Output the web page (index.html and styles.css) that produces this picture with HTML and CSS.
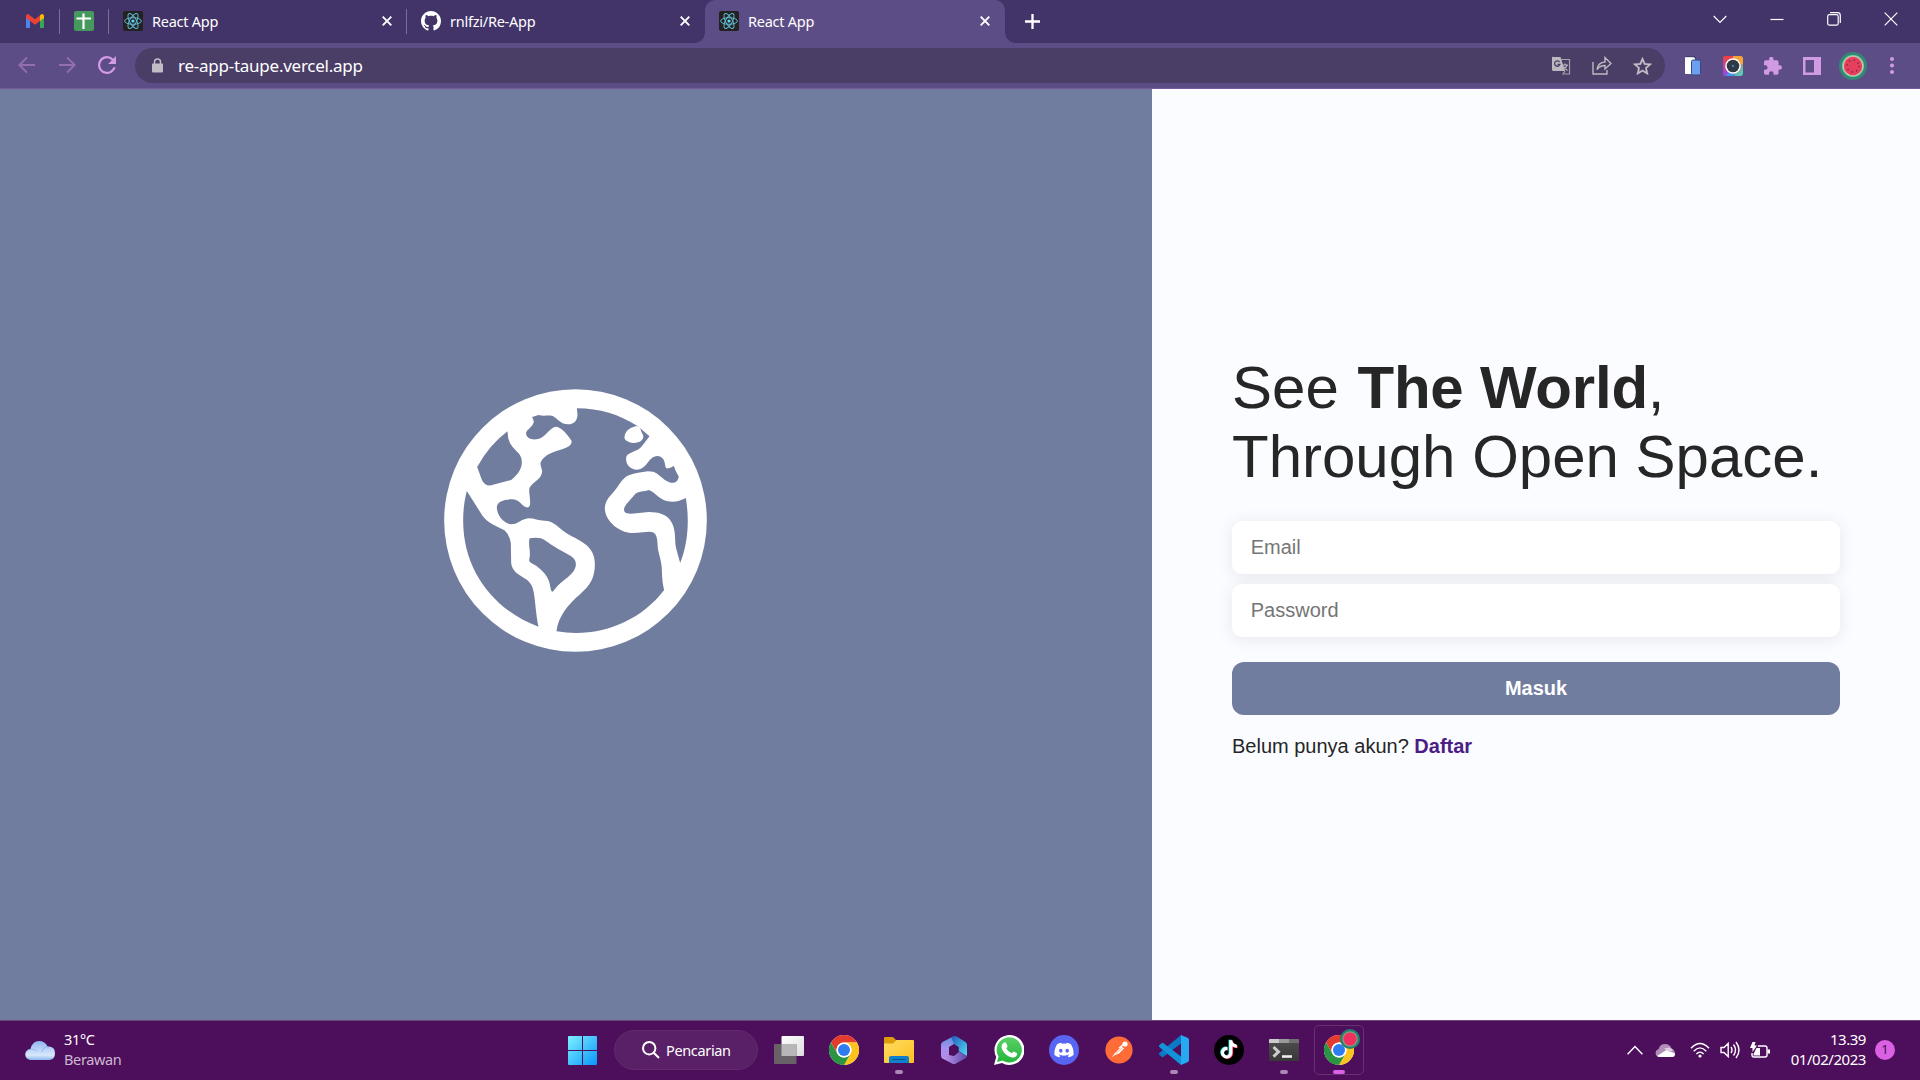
FILE: index.html
```html
<!DOCTYPE html>
<html lang="id">
<head>
<meta charset="utf-8">
<title>React App</title>
<link rel="stylesheet" href="styles.css">
</head>
<body>
<svg class="defs" width="0" height="0">
  <defs>
    <symbol id="react" viewBox="0 0 20 20">
      <rect width="20" height="20" rx="2" fill="#222"/>
      <g fill="none" stroke="#61b9d0" stroke-width="1">
        <ellipse cx="10" cy="10" rx="8.4" ry="3.3"/>
        <ellipse cx="10" cy="10" rx="8.4" ry="3.3" transform="rotate(60 10 10)"/>
        <ellipse cx="10" cy="10" rx="8.4" ry="3.3" transform="rotate(120 10 10)"/>
      </g>
      <circle cx="10" cy="10" r="1.6" fill="#61dafb"/>
    </symbol>
    <symbol id="close" viewBox="0 0 10 10"><path d="M.7.7l8.6 8.6M9.3.7L.7 9.3" stroke="#fff" stroke-width="1.9"/></symbol>
    <symbol id="chrome" viewBox="0 0 30 30">
      <circle cx="15" cy="15" r="15" fill="#fff"/>
      <path d="M2 7.5A15 15 0 0 1 28 7.5H15A7.5 7.5 0 0 0 8.5 18.75z" fill="#e33b2e"/>
      <path d="M28 7.5A15 15 0 0 1 15 30L21.5 18.75A7.5 7.5 0 0 0 15 7.5z" fill="#fcc31e"/>
      <path d="M15 30A15 15 0 0 1 2 7.5L8.5 18.75A7.5 7.5 0 0 0 21.5 18.75z" fill="#2a9443"/>
      <circle cx="15" cy="15" r="7.5" fill="#fff"/><circle cx="15" cy="15" r="6" fill="#2f7bf0"/>
    </symbol>
    <linearGradient id="win" x1="0" y1="0" x2="1" y2="1"><stop offset="0" stop-color="#7df1ff"/><stop offset="1" stop-color="#0a95fb"/></linearGradient>
    <linearGradient id="cloudFill" x1="0" y1="0" x2="0" y2="1"><stop offset="0" stop-color="#8fb6f3"/><stop offset=".75" stop-color="#d9e8fb"/><stop offset="1" stop-color="#8db4ee"/></linearGradient>
    <linearGradient id="folderFill" x1="0" y1="0" x2="1" y2="1"><stop offset="0" stop-color="#ffdc62"/><stop offset="1" stop-color="#fdc021"/></linearGradient>
    <linearGradient id="rainbow" x1="0" y1="0" x2="1" y2="1"><stop offset="0" stop-color="#f0413f"/><stop offset=".3" stop-color="#f03d5c"/><stop offset="1" stop-color="#3ee6c5"/></linearGradient>
    <linearGradient id="rainbowLeft" x1="0" y1="0" x2="0" y2="1"><stop offset="0" stop-color="#f0413f"/><stop offset="1" stop-color="#8c4bf2"/></linearGradient>
    <linearGradient id="m1" x1="0" y1="0" x2="0" y2="1"><stop offset="0" stop-color="#5d8ddd"/><stop offset=".5" stop-color="#a493ed"/><stop offset="1" stop-color="#b58ae6"/></linearGradient>
    <linearGradient id="m2" x1="0" y1="0" x2="1" y2="1"><stop offset="0" stop-color="#1f5abb"/><stop offset="1" stop-color="#51ddf8"/></linearGradient>
    <linearGradient id="m3" x1="0" y1="0" x2="1" y2="0"><stop offset="0" stop-color="#c297ef"/><stop offset="1" stop-color="#5b4ba8"/></linearGradient>
    <linearGradient id="wa" x1="0" y1="0" x2="0" y2="1"><stop offset="0" stop-color="#5ad167"/><stop offset="1" stop-color="#25b43c"/></linearGradient>
    <linearGradient id="viewFront" x1="0" y1="0" x2="1" y2="1"><stop offset="0" stop-color="#fff"/><stop offset="1" stop-color="#ddd"/></linearGradient>
    <linearGradient id="term" x1="0" y1="0" x2="0" y2="1"><stop offset="0" stop-color="#505050"/><stop offset="1" stop-color="#373737"/></linearGradient>
  </defs>
</svg>

<header class="browser">
  <div class="tabstrip">
    <div class="pin pin-mail">
      <svg width="18" height="14" viewBox="0 0 18 14"><path d="M0 2v11q0 1 1 1h3V5z" fill="#4a84f0"/><path d="M18 2v11q0 1-1 1h-3V5z" fill="#34a853"/><path d="M14 1.3V7l4-3V2q0-2-2-2z" fill="#fbbc04"/><path d="M0 2q0-2 2-2l7 5.2L14 1.3V7L9 10.8 4 7 0 4z" fill="#ea4335"/></svg>
    </div>
    <i class="sep"></i>
    <div class="pin pin-sheet">
      <svg width="20" height="20" viewBox="0 0 20 20"><rect width="20" height="20" rx="2" fill="#45995c"/><path d="M9.500 2.500v15.500M2.500 7.500h14.500" stroke="#fff" stroke-width="2.200"/></svg>
    </div>
    <i class="sep"></i>
    <div class="tab tab-first">
      <svg class="favicon"><use href="#react"/></svg><span class="tab-title">React App</span><svg class="tab-close"><use href="#close"/></svg>
    </div>
    <i class="sep"></i>
    <div class="tab tab-repo">
      <svg class="favicon" viewBox="0 0 16 16"><path fill="#fff" d="M8 0C3.58 0 0 3.58 0 8c0 3.54 2.29 6.53 5.47 7.59.4.07.55-.17.55-.38 0-.19-.01-.82-.01-1.49-2.01.37-2.53-.49-2.69-.94-.09-.23-.48-.94-.82-1.13-.28-.15-.68-.52-.01-.53.63-.01 1.08.58 1.23.82.72 1.21 1.87.87 2.33.66.07-.52.28-.87.51-1.07-1.78-.2-3.64-.89-3.64-3.95 0-.87.31-1.59.82-2.15-.08-.2-.36-1.02.08-2.12 0 0 .67-.21 2.2.82.64-.18 1.32-.27 2-.27s1.360.09 2 .27c1.530-1.040 2.200-.82 2.200-.82.44 1.100.16 1.920.08 2.120.51.56.82 1.270.82 2.150 0 3.070-1.870 3.750-3.650 3.950.29.25.54.73.54 1.480 0 1.070-.01 1.930-.01 2.200 0 .21.15.46.55.38A8.010 8.010 0 0 0 16 8c0-4.420-3.580-8-8-8z"/></svg>
      <span class="tab-title">rnlfzi/Re-App</span><svg class="tab-close"><use href="#close"/></svg>
    </div>
    <div class="tab tab-active">
      <svg class="favicon"><use href="#react"/></svg><span class="tab-title">React App</span><svg class="tab-close"><use href="#close"/></svg>
    </div>
    <svg class="new-tab" viewBox="0 0 15 15"><path d="M7.500 0v15M0 7.500h15" stroke="#fff" stroke-width="2.300"/></svg>
    <div class="window-buttons">
      <svg width="14" height="14" viewBox="0 0 14 14"><path d="M.7 4l6.300 6.300L13.300 4"/></svg>
      <svg width="14" height="14" viewBox="0 0 14 14"><path d="M.5 7.500h13"/></svg>
      <svg width="14" height="14" viewBox="0 0 14 14"><rect x=".7" y="2.700" width="10.500" height="10.500" rx="1.800"/><path d="M3 .7h7.500q2.800 0 2.800 2.800V11"/></svg>
      <svg width="14" height="14" viewBox="0 0 14 14"><path d="M.7.7l12.600 12.600M13.300.7L.7 13.300"/></svg>
    </div>
  </div>

  <div class="toolbar">
    <div class="nav">
      <svg class="dim" width="18" height="18" viewBox="0 0 18 18"><path d="M17 9H1.500M9 1.300L1.300 9 9 16.700"/></svg>
      <svg class="dim" width="18" height="18" viewBox="0 0 18 18"><path d="M1 9h15.500M9 1.300L16.700 9 9 16.700"/></svg>
      <svg width="18" height="18" viewBox="4 4 16 16"><path fill="#d39ae6" d="M17.650 6.350A7.960 7.960 0 0 0 12 4a8 8 0 1 0 7.730 10h-2.080A6 6 0 1 1 12 6c1.660 0 3.140.69 4.220 1.780L13 11h7V4z"/></svg>
    </div>
    <div class="address">
      <svg class="lock" viewBox="0 0 11 15"><rect y="5.500" width="11" height="9" rx="1" fill="#c1bcc5"/><path d="M2.500 6V4a3 3 0 0 1 6 0v2" fill="none" stroke="#c1bcc5" stroke-width="1.500"/></svg>
      <span class="url">re-app-taupe.vercel.app</span>
      <div class="address-actions">
        <svg width="19" height="19" viewBox="0 0 19 19"><path d="M1 1h7.500l4.500 14H1.500Q0 15 0 13.500V2Q0 .5 1 .5z" fill="#bdb8bf"/><path d="M9 3.500h8.500V18H11l2-3" fill="none" stroke="#a6a0ac" stroke-width="1.200"/><path d="M7.600 6.100a2.700 2.700 0 1 0 .3 2.200H5.500" fill="none" stroke="#4a3d66" stroke-width="1.300"/><path d="M10.500 9h5.500M13 7.500V9M15 9q-1 3.500-4 5M11.500 10.500q1.500 2.500 4 4" fill="none" stroke="#bdb8bf" stroke-width="1.100"/></svg>
        <svg width="20" height="19" viewBox="0 0 20 19"><path d="M1 6v12h14v-4M5 13.500Q6 6.500 13 6V1.500L19 7.500 13 13V9.500Q8 9.500 5 13.500z" fill="none" stroke="#bdb8bf" stroke-width="1.400"/></svg>
        <svg width="19" height="18" viewBox="2 2 20 19"><path fill="#c6c0ca" stroke="#c6c0ca" stroke-width=".3" d="M22 9.240l-7.190-.62L12 2 9.190 8.630 2 9.240l5.460 4.730L5.820 21 12 17.270 18.180 21l-1.630-7.030zM12 15.400l-3.760 2.270 1-4.280-3.320-2.880 4.380-.38L12 6.100l1.710 4.040 4.380.38-3.320 2.880 1 4.280z"/></svg>
      </div>
    </div>
    <div class="extensions">
      <svg width="18" height="20" viewBox="0 0 18 20"><path d="M1 2q0-1 1-1h7q2 0 2 2v15H2q-1 0-1-1z" fill="#fff"/><path d="M2 .7h8q1.500.5 1.800 2" fill="none" stroke="#3d3a66"/><rect x="7.500" y="4" width="9" height="15" rx="1.500" fill="#6b9ff0" stroke="#3a4784"/></svg>
      <svg width="20" height="20" viewBox="0 0 20 20"><rect width="20" height="20" rx="3" fill="url(#rainbow)"/><path d="M0 3q0-3 3-3l7 10-7 10q-3 0-3-3z" fill="url(#rainbowLeft)"/><path d="M3 20L10 10l2 10z" fill="#4196ed"/><path d="M10 0h7q3 0 3 3v5L10 10z" fill="#f4a53a"/><circle cx="10" cy="10" r="7.800" fill="#fff"/><circle cx="10" cy="10" r="6.300" fill="#343941"/><circle cx="10" cy="10" r="3.500" fill="#263c4c"/><circle cx="10" cy="10" r="1.300" fill="#55748c"/></svg>
      <svg width="18" height="18" viewBox="2 1.500 21 20.500"><path fill="#d09be2" d="M20.500 11H19V7a2 2 0 0 0-2-2h-4V3.500a2.500 2.500 0 0 0-5 0V5H4a2 2 0 0 0-1.990 2v3.800H3.500a2.700 2.700 0 0 1 0 5.400H2V20a2 2 0 0 0 2 2h3.800v-1.500a2.700 2.700 0 0 1 5.400 0V22H17a2 2 0 0 0 2-2v-4h1.500a2.500 2.500 0 0 0 0-5z"/></svg>
      <svg width="18" height="18" viewBox="0 0 18 18"><path fill="#d09be2" fill-rule="evenodd" d="M0 0h18v18H0zM2.500 3v12.500H11V3z"/></svg>
      <svg width="28" height="28" viewBox="0 0 28 28"><circle cx="14" cy="14" r="14" fill="#348774"/><circle cx="14" cy="14" r="11" fill="#77d0a8"/><circle cx="14" cy="14" r="10" fill="#f5b9a8"/><circle cx="14" cy="14" r="9.200" fill="#e53f5d"/><circle cx="14" cy="14" r="6" fill="none" stroke="#72283f" stroke-width="1.500" stroke-dasharray="1.300 3.410"/></svg>
      <svg width="4" height="17" viewBox="0 0 4 17"><g fill="#d09be2"><circle cx="2" cy="2" r="2"/><circle cx="2" cy="8.500" r="2"/><circle cx="2" cy="15" r="2"/></g></svg>
    </div>
  </div>
</header>

<main class="page">
  <section class="hero">
    <svg class="globe" viewBox="44 28 788 789">
      <circle cx="438" cy="422.500" r="394" fill="#fff"/>
      <g class="sea">
        <path d="M234 155Q180 195 143 262L157 300Q166 320 185 317L245 301C262 288 277 270 277 248C277 225 265 220 250 203Q234 185 234 155z"/>
        <path d="M112 334C103 370 101 395 101 424C101 570 190 690 327 741C315 680 318 630 303 612C290 590 250 588 245 550L244 490Q240 465 225 452C200 440 175 430 160 410z"/>
        <path d="M202 383C202 365 225 359 247 359C270 359 275 378 290 383Q302 385 302 370C302 350 297 335 300 325C310 305 337 300 338 275C336 262 330 255 335 245C345 225 375 215 400 208C420 202 430 192 425 182C415 165 395 142 380 141C360 142 350 174 322 179C300 181 288 172 290 158C293 150 312 140 313 125L308 112L327 106C340 110 355 106 370 109C385 118 395 134 415 134C435 134 444 120 444 105L442 86C510 86 570 105 624 139L660 170L637 200C625 217 600 215 591 230C585 250 600 270 622 270C655 268 655 230 684 229C712 232 703 262 712 266Q718 268 733 259L739 275L748 291C742 315 725 313 705 300C685 285 680 275 655 275C635 278 615 280 600 286C575 295 570 320 545 345C515 375 522 410 555 440C590 465 610 461 640 458C670 453 682 455 684 490C684 520 697 540 697 570Q698 610 704 631C640 715 540 760 440 760Q410 760 381 755C385 710 420 670 450 645C485 615 497 590 496 550C495 500 455 485 420 466C385 445 375 423 345 423C320 423 305 410 285 419C265 425 265 434 245 434C220 430 202 405 202 383z"/>
        <path d="M300 476C320 473 335 474 345 481C370 500 400 515 425 530C445 543 442 565 428 580C410 600 390 608 371 635Q366 640 363 625C360 600 350 580 320 558C305 549 299 548 299 540Q302 530 301 515Q297 490 300 476z"/>
        <path d="M584 393C580 378 605 360 615 345C625 333 645 337 658 331C680 338 690 366 728 366Q750 366 769 355C780 420 776 490 752 550C745 520 737 505 737 480C737 430 720 397 658 397L605 402Q585 402 584 393z"/>
      </g>
      <path fill="#fff" d="M622 139L631 143Q636 160 641 167C644 180 632 190 612 190C595 188 583 180 585 171C588 150 605 143 622 139z"/>
    </svg>
  </section>
  <section class="login">
    <h1 class="headline">See <strong>The World</strong>,<br>Through Open Space.</h1>
    <form class="login-form">
      <input class="field" type="email" placeholder="Email">
      <input class="field" type="password" placeholder="Password">
      <button class="submit" type="button">Masuk</button>
    </form>
    <p class="signup">Belum punya akun? <a class="signup-link" href="#">Daftar</a></p>
  </section>
</main>

<footer class="taskbar">
  <div class="weather">
    <svg width="30" height="19" viewBox="0 0 30 19"><path d="M6 19a5.500 5.500 0 0 1-.5-11Q7.500 0 14 0q6 0 8.500 5.500Q30 5 30 12q0 7-6 7z" fill="url(#cloudFill)"/><path d="M17 11q1-5 6-5.500M2 10q4-4 10 0" stroke="#7fa5ea" stroke-opacity=".6" fill="none"/></svg>
    <div class="weather-text"><span>31°C</span><span class="weather-state">Berawan</span></div>
  </div>
  <div class="dock">
    <svg class="start" viewBox="0 0 29 29"><path fill="url(#win)" d="M1 0h13v14H0V1q0-1 1-1zM15 0h13q1 0 1 1v13H15zM0 15h14v14H1q-1 0-1-1zM15 15h14v13q0 1-1 1H15z"/></svg>
    <div class="search"><svg width="18" height="18" viewBox="0 0 18 18"><circle cx="7.200" cy="7.200" r="6.200"/><path d="M11.700 11.700L17 17"/></svg><span>Pencarian</span></div>
    <div class="app"><svg viewBox="0 0 30 30"><rect x="7.500" y="1" width="22.500" height="20" rx="1" fill="url(#viewFront)"/><rect y="9" width="22.500" height="20" rx="1" fill="#686268"/><rect x="7.500" y="9" width="15" height="12" fill="#b8b6b8"/></svg></div>
    <div class="app"><svg><use href="#chrome"/></svg></div>
    <div class="app running"><svg viewBox="0 0 30 30"><path d="M0 3q0-1 1-1h8l4 4v4H0z" fill="#dd9c0a"/><path d="M0 8.500h9L12.500 5H29q1 0 1 1v21q0 1-1 1H1q-1 0-1-1z" fill="url(#folderFill)"/><path d="M5 28v-5q0-2 2-2h16q2 0 2 2v5z" fill="#1080cc"/><path d="M8.500 24.500h13" stroke="#075391"/></svg></div>
    <div class="app"><svg viewBox="0 0 30 30"><path d="M14 1.500L3.500 7Q2 8 2 10v11q0 2 2 3l6-3.500V12l5-3z" fill="url(#m1)"/><path d="M12 2l4-1q1 0 2 .7L26.500 7Q28 8 28 10v11L19.500 16v-4L15 9z" fill="url(#m2)"/><path d="M3.500 23.500L10 20l5 1 4.500-4.500L28 21q-.5 1.500-2 2.500L17 28.500q-2 1-4 0z" fill="url(#m3)"/><path d="M15 9.500l4.500 2.700v5.300L15 20.500l-4.500-3v-5.300z" fill="#4d0f5c"/></svg></div>
    <div class="app"><svg viewBox="0 0 30 30"><path d="M0 30L2.200 22A15 15 0 1 1 8 28z" fill="#fff"/><path d="M3 27l1.600-5.400A12.600 12.600 0 1 1 8.500 25.500z" fill="url(#wa)"/><path d="M10 7.500q1-.6 2 .2l1.500 3.200q.2.700-1.300 2.300 1.800 3.500 5.600 5 1.300-1.800 2-1.800l3.300 1.800c.5 3-2.500 4.500-4.500 4.300C13 22 7.500 16 7.500 11.500q0-2.500 2.500-4z" fill="#fff"/></svg></div>
    <div class="app"><svg viewBox="0 0 30 30"><circle cx="15" cy="15" r="15" fill="#5865f2"/><path transform="translate(5.400 5.400) scale(.8)" fill="#fff" d="M20.317 4.370a19.791 19.791 0 0 0-4.885-1.515.074.074 0 0 0-.079.037c-.21.375-.444.864-.608 1.250a18.270 18.270 0 0 0-5.487 0 12.640 12.640 0 0 0-.617-1.250.077.077 0 0 0-.079-.037A19.736 19.736 0 0 0 3.677 4.370a.07.07 0 0 0-.032.027C.533 9.046-.32 13.580.099 18.057a.082.082 0 0 0 .031.057 19.900 19.900 0 0 0 5.993 3.030.078.078 0 0 0 .084-.028c.462-.63.874-1.295 1.226-1.994a.076.076 0 0 0-.041-.106 13.107 13.107 0 0 1-1.872-.892.077.077 0 0 1-.008-.128c.126-.094.252-.192.372-.292a.074.074 0 0 1 .077-.01c3.928 1.793 8.180 1.793 12.062 0a.074.074 0 0 1 .078.009c.12.099.246.198.373.292a.077.077 0 0 1-.006.127 12.299 12.299 0 0 1-1.873.892.077.077 0 0 0-.041.107c.36.698.772 1.362 1.225 1.993a.076.076 0 0 0 .084.028 19.839 19.839 0 0 0 6.002-3.030.077.077 0 0 0 .032-.054c.5-5.177-.838-9.674-3.549-13.660a.061.061 0 0 0-.031-.03zM8.020 15.330c-1.183 0-2.157-1.085-2.157-2.419 0-1.333.956-2.419 2.157-2.419 1.210 0 2.176 1.096 2.157 2.420 0 1.333-.956 2.418-2.157 2.418zm7.975 0c-1.183 0-2.157-1.085-2.157-2.419 0-1.333.955-2.419 2.157-2.419 1.210 0 2.176 1.096 2.157 2.420 0 1.333-.946 2.418-2.157 2.418z"/></svg></div>
    <div class="app"><svg viewBox="0 0 30 30"><circle cx="15" cy="15" r="13.600" fill="#ff6c37"/><path d="M7.500 22.500L11 18l6.500-6.500 2.500 2-5 5-4 1.500z" fill="#fff"/><path d="M15 13l4.500-3.500" stroke="#fff" stroke-width="1.500"/><circle cx="21" cy="9" r="2.600" fill="#fff"/><path d="M12 18.500l6-5.500" stroke="#ff9f7d" stroke-width=".8"/></svg></div>
    <div class="app running"><svg viewBox="0 0 30 30"><path d="M22 0v8.500L3.500 22.500 0 19.500q-.5-.8.300-1.500z" fill="#0b79c5"/><path d="M22 30v-8.500L3.500 7.500 0 10.500q-.5.800.3 1.500z" fill="#1292d8"/><path d="M22 0l7 3q1 .6 1 2v20q0 1.400-1 2l-7 3z" fill="#27a9f2"/></svg></div>
    <div class="app"><svg viewBox="0 0 30 30"><circle cx="15" cy="15" r="15" fill="#000"/><g transform="translate(5.800 5.200) scale(.76)"><path transform="translate(-1 -.7)" fill="#25f4ee" d="M12.525.02c1.310-.02 2.610-.01 3.910-.02.08 1.530.63 3.090 1.750 4.170 1.120 1.110 2.700 1.620 4.240 1.790v4.030c-1.440-.05-2.890-.35-4.200-.97-.57-.26-1.100-.59-1.620-.93-.01 2.920.01 5.840-.02 8.750-.08 1.400-.54 2.790-1.350 3.940-1.310 1.920-3.580 3.170-5.910 3.210-1.430.08-2.860-.31-4.080-1.030-2.020-1.190-3.440-3.370-3.650-5.710-.02-.5-.03-1-.01-1.490.18-1.900 1.120-3.720 2.580-4.960 1.660-1.440 3.980-2.130 6.150-1.720.02 1.480-.04 2.960-.04 4.440-.99-.32-2.150-.23-3.020.37-.63.41-1.110 1.040-1.360 1.750-.21.51-.15 1.070-.14 1.610.24 1.640 1.820 3.020 3.500 2.870 1.120-.01 2.190-.66 2.770-1.610.19-.33.4-.67.41-1.060.1-1.790.06-3.570.07-5.360.01-4.030-.01-8.050.02-12.070z"/><path transform="translate(1 .7)" fill="#fe2c55" d="M12.525.02c1.310-.02 2.610-.01 3.910-.02.08 1.530.63 3.090 1.750 4.170 1.120 1.110 2.700 1.620 4.240 1.790v4.030c-1.440-.05-2.890-.35-4.200-.97-.57-.26-1.100-.59-1.620-.93-.01 2.920.01 5.840-.02 8.750-.08 1.400-.54 2.790-1.350 3.940-1.310 1.920-3.580 3.170-5.910 3.210-1.430.08-2.860-.31-4.080-1.030-2.020-1.190-3.440-3.370-3.650-5.710 6 5 11 1 11.200-3z"/><path fill="#fff" d="M12.525.02c1.310-.02 2.610-.01 3.910-.02.08 1.530.63 3.090 1.750 4.170 1.120 1.110 2.700 1.620 4.240 1.790v4.030c-1.440-.05-2.890-.35-4.200-.97-.57-.26-1.100-.59-1.620-.93-.01 2.920.01 5.840-.02 8.750-.08 1.400-.54 2.790-1.350 3.940-1.310 1.920-3.580 3.170-5.910 3.210-1.430.08-2.860-.31-4.080-1.030-2.020-1.190-3.440-3.370-3.650-5.710-.02-.5-.03-1-.01-1.490.18-1.900 1.120-3.720 2.580-4.960 1.660-1.440 3.980-2.130 6.150-1.720.02 1.480-.04 2.960-.04 4.440-.99-.32-2.150-.23-3.020.37-.63.41-1.110 1.040-1.360 1.750-.21.51-.15 1.070-.14 1.610.24 1.640 1.820 3.020 3.500 2.870 1.120-.01 2.190-.66 2.770-1.610.19-.33.4-.67.41-1.060.1-1.790.06-3.570.07-5.360.01-4.030-.01-8.050.02-12.070z"/></g></svg></div>
    <div class="app running"><svg viewBox="0 0 30 30"><rect y="4" width="30" height="22" rx="1.500" fill="url(#term)"/><path d="M0 8V5q0-1 1-1h9v4z" fill="#ccc"/><path d="M10 4h10v4H10z" fill="#999"/><path d="M20 4h9q1 0 1 1v3H20z" fill="#707070"/><path d="M4.500 12l5 4.800-5 4.800" fill="none" stroke="#ccc" stroke-width="3"/><path d="M13 21.500h10" stroke="#eee" stroke-width="2.600"/></svg></div>
    <div class="app running active"><svg><use href="#chrome"/></svg>
      <svg class="profile-badge" viewBox="0 0 20 20"><circle cx="10" cy="10" r="10" fill="#22806f"/><circle cx="10" cy="10" r="7.700" fill="#8c9a80"/><circle cx="10" cy="10" r="6.500" fill="#f02f5c"/></svg></div>
  </div>
  <div class="tray">
    <svg width="16" height="10" viewBox="0 0 16 10"><path d="M.6 9.300L8 1.500l7.400 7.800"/></svg>
    <svg class="onedrive" width="20" height="13" viewBox="0 0 20 13"><path d="M4 13a4 4 0 0 1-.5-7.800Q5 0 10 0q5 0 6.500 4.500Q20 6 20 9.500q0 3.500-3 3.500z"/><path d="M2 12L11.500 6 20 9.500q0 3.500-3 3.500H4z"/><path d="M9 4.500l5-1 4 2-3 3z"/></svg>
    <svg width="20" height="16" viewBox="0 0 20 16"><path d="M1 6.200q9-9.500 18 0M3.700 9.200q6.300-6.600 12.600 0M6.400 12q3.600-3.700 7.200 0"/><circle cx="10" cy="14" r="1.600" fill="#fff" stroke="none"/></svg>
    <svg width="20" height="18" viewBox="0 0 20 18"><path d="M1 6.500h3L8.200 2.500v13L4 11.500H1zM11 6q2 3 0 6M13.500 3.500q4 5.500 0 11M16 1q6 8 0 16"/></svg>
    <svg width="20" height="17" viewBox="0 0 20 17"><path d="M8 4h7q2 0 2 2v7q0 2-2 2H4q-2 0-2-2v-2"/><path class="solid" d="M2.500 0h3L4.500 3.500H7L2.500 10V6H0zM3.500 12l3-6H10v7.500H3.500zM17.500 7.500H20v4h-2.500z"/></svg>
    <div class="clock"><span>13.39</span><span>01/02/2023</span></div>
    <span class="notice">1</span>
  </div>
</footer>
</body>
</html>
```
FILE: styles.css
```css
* { box-sizing: border-box; }
body { margin: 0; width: 1920px; height: 1080px; overflow: hidden; display: flex; flex-direction: column; font-family: "Noto Sans", "Open Sans", sans-serif; }
svg { display: block; flex: none; }
.defs { position: absolute; }

/* browser chrome */
.browser { height: 89px; background: #5d4d87; border-bottom: 1px solid #75599a; color: #fff; }
.tabstrip { height: 43px; background: #423369; display: flex; align-items: center; }
.pin { display: flex; justify-content: center; padding-bottom: 1px; }
.pin-mail { width: 59px; padding-left: 11px; }
.pin-sheet { width: 48px; }
.sep { width: 1px; height: 25px; background: #7b6f96; }
.tab { width: 298px; height: 43px; padding: 0 15px 1px 14px; display: flex; align-items: center; }
.tab-first { width: 297px; padding-left: 14px; padding-right: 14px; }
.favicon { width: 20px; height: 20px; }
.tab-title { flex: 1; margin-left: 9px; font-size: 14.5px; letter-spacing: -.25px; line-height: 20px; padding-bottom: 1px; }
.tab-close { width: 10px; height: 10px; }
.tab-active { position: relative; width: 300px; background: #5d4d87; border-radius: 10px 10px 0 0; }
.tab-active::before, .tab-active::after { content: ""; position: absolute; bottom: 0; width: 10px; height: 10px; }
.tab-active::before { left: -10px; background: radial-gradient(circle at 0 0, #423369 9.5px, #5d4d87 10px); }
.tab-active::after { right: -10px; background: radial-gradient(circle at 100% 0, #423369 9.5px, #5d4d87 10px); }
.new-tab { width: 15px; height: 15px; margin-left: 20px; }
.window-buttons { margin: 0 22px 6px auto; display: flex; gap: 43px; }
.window-buttons path, .window-buttons rect { fill: none; stroke: #fff; stroke-width: 1.2; }

.toolbar { height: 45px; display: flex; align-items: center; }
.nav { width: 135px; padding: 0 0 1px 18px; display: flex; gap: 22px; }
.nav .dim path { fill: none; stroke: #936fb1; stroke-width: 1.9; }
.address { width: 1530px; height: 35px; padding: 0 13px 0 17px; border-radius: 18px; background: #4a3d66; display: flex; align-items: center; }
.lock { width: 11px; height: 15px; }
.url { margin-left: 15px; font-size: 17px; letter-spacing: -.25px; line-height: 24px; }
.address-actions { margin-left: auto; display: flex; align-items: center; gap: 21px; }
.extensions { margin-left: 19px; display: flex; align-items: center; gap: 21px; }
.extensions svg:nth-child(4) { margin-right: -3px; }
.extensions svg:nth-child(6) { margin-left: 2px; }

/* page */
.page { height: 931px; display: grid; grid-template-columns: 1152px 768px; }
.hero { background: #717d9f; display: flex; align-items: center; justify-content: center; padding: 0 1px 68px 0; }
.globe { width: 263px; height: 263px; }
.sea { fill: #717d9f; }
.login { background: #fbfcff; padding: 264px 80px 0; font-family: "Liberation Sans", Arial, sans-serif; color: #262626; }
.headline { margin: 0 0 30px; font-size: 60px; line-height: 69px; font-weight: 400; }
.headline strong { margin-left: 2px; letter-spacing: -.2px; }
.login-form { display: flex; flex-direction: column; gap: 10px; }
.field { height: 53px; padding: 0 18.75px; border: 0; border-radius: 10px; background: #fff; box-shadow: 0 2px 16px rgba(60, 60, 80, .11); font: 20px "Liberation Sans", Arial, sans-serif; }
.field::placeholder { color: #757575; }
.submit { height: 53px; margin-top: 15px; border: 0; border-radius: 12px; background: #717d9f; color: #fff; font: 700 20px "Liberation Sans", Arial, sans-serif; }
.signup { margin: 20px 0 0; font-size: 20px; line-height: 23px; }
.signup-link { color: #4b1c85; font-weight: 700; text-decoration: none; }

/* taskbar */
.taskbar { height: 60px; padding-bottom: 1px; background: #4d0f5c; border-top: 1px solid #6c4676; color: #fff; display: flex; align-items: center; font-size: 14.5px; letter-spacing: -.35px; line-height: 20px; }
.weather { width: 568px; padding-left: 25px; display: flex; align-items: center; gap: 9px; }
.weather-text { display: flex; flex-direction: column; padding-bottom: 2px; }
.weather-state { color: #cdb8d1; }
.dock { display: flex; align-items: center; }
.start { width: 29px; height: 29px; }
.search { width: 144px; height: 40px; margin: 0 6px 0 17px; padding-left: 27px; border: 1px solid #602a6d; border-radius: 20px; background: #5a2067; display: flex; align-items: center; gap: 6px; }
.search circle, .search path { fill: none; stroke: #fff; stroke-width: 2; }
.app { position: relative; width: 50px; height: 50px; margin-right: 5px; display: flex; align-items: center; justify-content: center; }
.app > svg { width: 30px; height: 30px; }
.running::after { content: ""; position: absolute; bottom: 1px; left: 21px; width: 8px; height: 4px; border-radius: 2px; background: #ad87b5; }
.active { border: 1px solid #65316f; border-radius: 5px; }
.active::after { bottom: 0; left: 18px; width: 12px; background: #dc60e4; }
.app > .profile-badge { position: absolute; top: 3px; right: 3px; width: 20px; height: 20px; }
.tray { margin-left: auto; padding-right: 25px; display: flex; align-items: center; }
.tray svg { margin-right: 10px; }
.tray svg:first-child { margin-right: 12px; }
.tray .onedrive { margin-right: 15px; }
.tray path { fill: none; stroke: #fff; stroke-width: 1.4; }
.tray .onedrive path { fill: #b18db7; stroke: none; }
.tray .onedrive path:nth-child(2) { fill: #fff; }
.tray .onedrive path:nth-child(3) { fill: #ded0e0; }
.tray .solid { fill: #fff; stroke: none; }
.clock { width: 86px; margin-right: 9px; padding-bottom: 2px; display: flex; flex-direction: column; align-items: flex-end; font-size: 15px; letter-spacing: -.45px; }
.notice { width: 20px; height: 20px; border-radius: 50%; background: #dc60e4; color: #30103a; font-size: 12px; text-align: center; letter-spacing: 0; }
```
